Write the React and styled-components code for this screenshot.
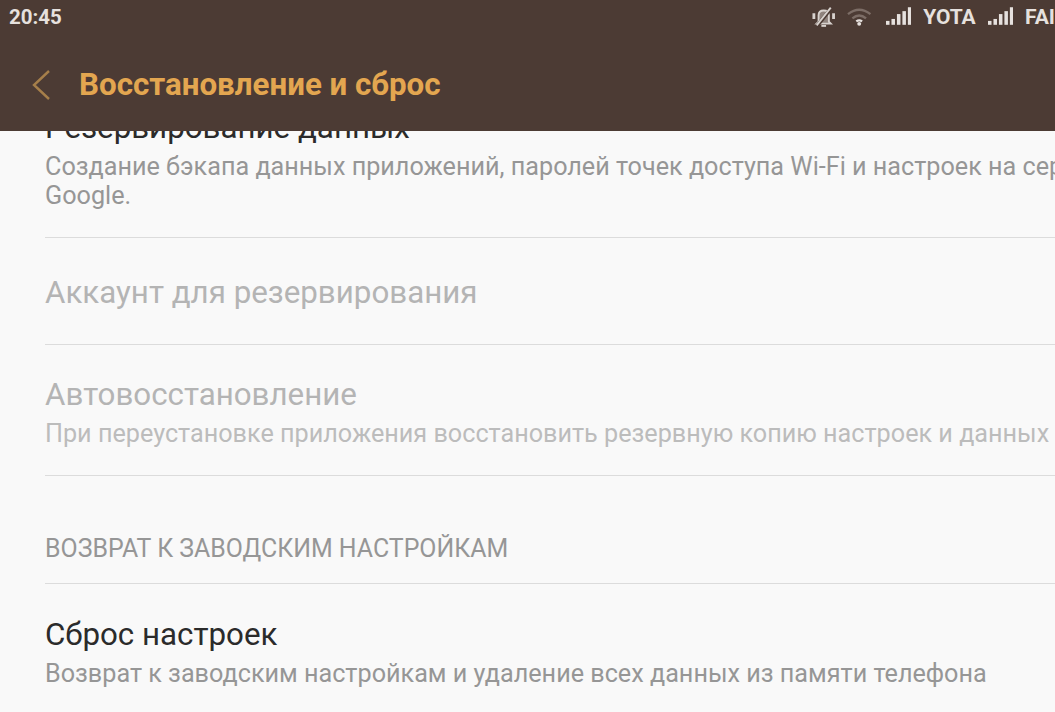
import React from 'react';
import styled, { createGlobalStyle } from 'styled-components';

const Global = createGlobalStyle`
  html, body {
    margin: 0;
    padding: 0;
    background: #f9f9f9;
  }
`

const Screen = styled.div`
  width: 1055px;
  height: 712px;
  overflow: hidden;
  display: flex;
  flex-direction: column;
  background: #f9f9f9;
  font-family: Roboto, "Noto Sans", sans-serif;
`

const Header = styled.header`
  flex: none;
  height: 131px;
  background: #4c3b34;
  display: flex;
  flex-direction: column;
`

const StatusBar = styled.div`
  flex: none;
  height: 33px;
  display: flex;
  align-items: center;
  justify-content: space-between;
  padding-left: 9px;
  color: #e6e1de;
  font-size: 21px;
  font-weight: 700;
  overflow: hidden;
`

const Clock = styled.span`
  font-size: 20.5px;
`

const StatusIcons = styled.div`
  display: flex;
  align-items: center;
  flex: none;
  width: 243px;
  gap: 12px;
  white-space: nowrap;
`

const TitleBar = styled.div`
  flex: 1;
  display: flex;
  align-items: center;
  gap: 29px;
  padding: 5px 0 0 32px;
`

const Title = styled.h1`
  margin: 0;
  color: #e3a650;
  font-size: 31.3px;
  font-weight: 700;
`

const List = styled.main`
  flex: 1;
  overflow: hidden;
  padding-left: 45px;
`

const Row = styled.div`
  border-bottom: ${p => (p.$last ? 'none' : '1px solid #dcdcdc')};
  padding: ${p => p.$padding};
  white-space: nowrap;

  &:first-child {
    margin-top: -21px;
  }
`

const RowTitle = styled.div`
  font-size: 31.3px;
  line-height: 36px;
  color: ${p => (p.$disabled ? '#b4b4b4' : '#2b2b2b')};
`

const RowText = styled.div`
  font-size: 25.2px;
  line-height: 29px;
  margin-top: 6px;
  color: ${p => (p.$disabled ? '#bcbcbc' : '#969696')};
`

const SectionLabel = styled.div`
  font-size: 24.9px;
  line-height: 29px;
  color: #969696;
`

const MuteIcon = () => (
  <svg width="24" height="22" viewBox="0 0 25 22" fill="none" stroke="#d8d2ce" strokeWidth="2">
    <path d="M7 16 V9 Q7 4 12.5 4 Q18 4 18 9 V16 L20 18 H5 Z" fill="#8f837d" />
    <path d="M10 20.5 H15" />
    <path d="M2 7 V13 M23 7 V13" strokeWidth="3" />
    <path d="M5 21 L21 1" stroke="#4c3b34" strokeWidth="4" />
    <path d="M5 20 L20 1" strokeWidth="2" />
  </svg>
)

const WifiIcon = () => (
  <svg width="27" height="18" viewBox="0 0 27 18" fill="none" stroke="#7c6d66" strokeWidth="2.4">
    <path d="M1 6 Q12.5 -3 24 6" />
    <path d="M5.5 10.5 Q12.5 4.5 19.5 10.5" />
    <path d="M9.5 13.5 Q12.5 11.5 15.5 13.5" stroke="#e6e1de" />
    <circle cx="12.5" cy="16" r="2" fill="#e6e1de" stroke="none" />
  </svg>
)

const signalBars = [4, 6, 11, 14, 18];

const SignalIcon = () => (
  <svg width="26" height="20" viewBox="0 0 26 20" fill="#e6e1de">
    {signalBars.map((h, i) => (
      <rect key={i} x={i * 5.6} y={18 - h} width="3.6" height={h} />
    ))}
  </svg>
)

const BackIcon = () => (
  <svg width="18" height="30" viewBox="0 0 18 30" fill="none" stroke="#a67f4a" strokeWidth="2.4">
    <path d="M17 1 L2 15 L17 29" />
  </svg>
)

const App = () => {
  return (
    <Screen>
      <Global />
      <Header>
        <StatusBar>
          <Clock>20:45</Clock>
          <StatusIcons>
            <MuteIcon />
            <WifiIcon />
            <SignalIcon />
            <span>YOTA</span>
            <SignalIcon />
            <span>FAI</span>
          </StatusIcons>
        </StatusBar>
        <TitleBar>
          <BackIcon />
          <Title>Восстановление и сброс</Title>
        </TitleBar>
      </Header>
      <List>
        <Row $padding="0 0 27px">
          <RowTitle>Резервирование данных</RowTitle>
          <RowText>Создание бэкапа данных приложений, паролей точек доступа Wi-Fi и настроек на серверах<br />Google.</RowText>
        </Row>
        <Row $padding="37px 0 33px">
          <RowTitle $disabled>Аккаунт для резервирования</RowTitle>
        </Row>
        <Row $padding="32px 0 27px">
          <RowTitle $disabled>Автовосстановление</RowTitle>
          <RowText $disabled>При переустановке приложения восстановить резервную копию настроек и данных</RowText>
        </Row>
        <Row $padding="58px 0 20px">
          <SectionLabel>ВОЗВРАТ К ЗАВОДСКИМ НАСТРОЙКАМ</SectionLabel>
        </Row>
        <Row $last $padding="33px 0 0">
          <RowTitle>Сброс настроек</RowTitle>
          <RowText>Возврат к заводским настройкам и удаление всех данных из памяти телефона</RowText>
        </Row>
      </List>
    </Screen>
  );
};

export default App;
